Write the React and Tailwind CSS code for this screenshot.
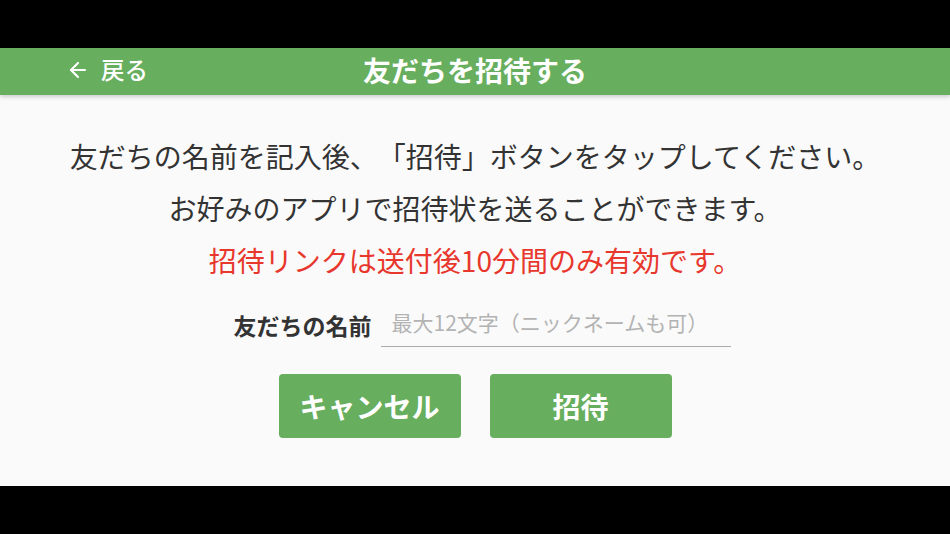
import { ArrowLeft } from "lucide-react"

const font = { fontFamily: '"Noto Sans CJK JP", "Noto Sans", sans-serif' }

export default function App() {
  return (
    <div className="flex h-[534px] w-[950px] flex-col bg-black [text-spacing-trim:space-all]" style={font}>
      <div className="h-[48px] shrink-0" />

      {/* header */}
      <div className="relative z-10 flex h-[47px] shrink-0 items-center bg-[#67ae5e] pb-[3px] shadow-[0_2px_4px_rgba(0,0,0,0.18)]">
        <div className="flex w-[200px] items-center pl-[66px] text-white">
          <ArrowLeft size={24} strokeWidth={2.2} />
          <span className="ml-[11px] text-[23.5px] font-medium leading-none">戻る</span>
        </div>
        <div className="flex-1 pr-[200px] text-center text-[28px] font-bold leading-none text-white">
          友だちを招待する
        </div>
      </div>

      {/* body */}
      <div className="flex flex-1 flex-col items-center bg-[#fafafa] pt-[35px]">
        <p className="text-[28px] leading-[52px] text-[#333333]">
          友だちの名前を記入後、「招待」ボタンをタップしてください。
        </p>
        <p className="text-[28px] leading-[52px] text-[#333333]">
          お好みのアプリで招待状を送ることができます。
        </p>
        <p className="text-[28px] leading-[52px] text-[#e8372c]">
          招待リンクは送付後10分間のみ有効です。
        </p>

        <div className="mt-[16px] flex items-end pl-[14px]">
          <label className="mb-[10px] text-[23px] font-bold leading-none text-[#333333]">
            友だちの名前
          </label>
          <input
            type="text"
            placeholder="最大12文字（ニックネームも可）"
            className="ml-[9px] h-[45px] w-[350px] border-b-[1.5px] border-[#aaaaaa] bg-transparent px-[11px] pb-[4px] text-[21px] text-[#333333] outline-none placeholder:text-[#b3b3b3]"
          />
        </div>

        <div className="mt-[27px] flex gap-[29px]">
          <button className="h-[64px] w-[182px] rounded-[4px] bg-[#67ae5e] text-[28px] font-bold text-white">
            キャンセル
          </button>
          <button className="h-[64px] w-[182px] rounded-[4px] bg-[#67ae5e] text-[28px] font-bold text-white">
            招待
          </button>
        </div>
      </div>

      <div className="h-[48px] shrink-0" />
    </div>
  )
}
